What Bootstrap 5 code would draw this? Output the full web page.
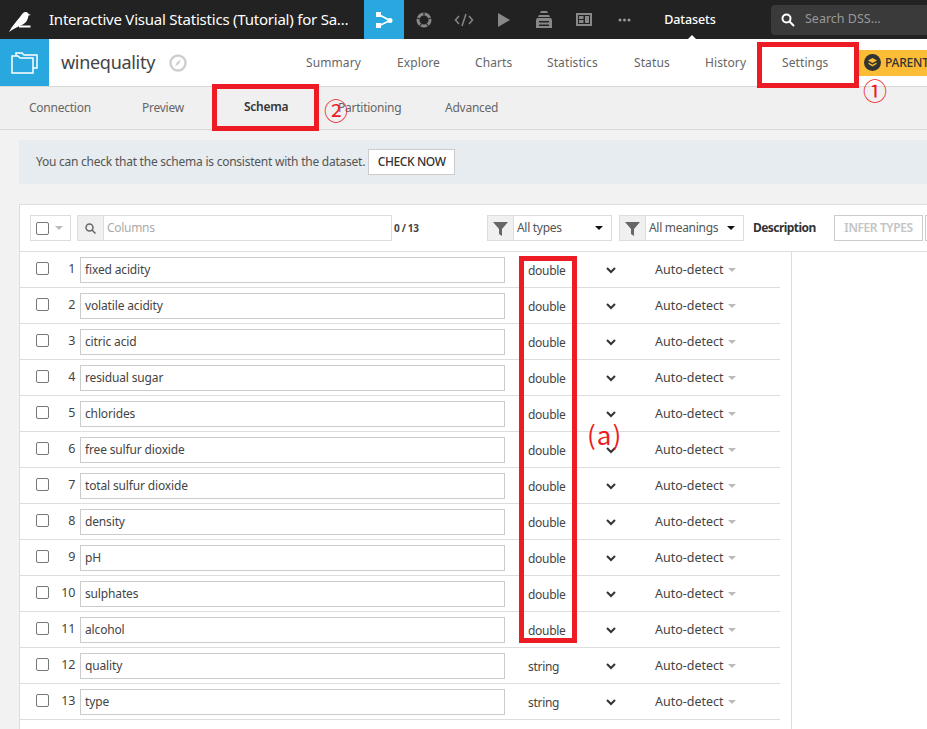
<!DOCTYPE html>
<html lang="en"><head><meta charset="utf-8"><title>winequality schema</title>
<link href="https://cdn.jsdelivr.net/npm/bootstrap@5.3.0/dist/css/bootstrap.min.css" rel="stylesheet">
<style>
html,body{height:729px;overflow:hidden}
body{background:#f2f2f2;font-family:"Noto Sans","Open Sans",sans-serif;font-size:12px;color:#333;position:relative;width:927px}
.top-bar{height:39px;background:#222;color:#fff}
.logo-cell{width:49px;flex:none;padding-left:8px}
.proj-title{width:315px;flex:none;font-size:15px;white-space:nowrap;overflow:hidden;letter-spacing:-.22px}
.tool-cell{width:40px;height:39px;flex:none}
.tool-on{background:#29a8df}
.ds-link{width:127px;flex:none;font-size:12.5px;text-align:center;font-weight:500;position:relative;padding-right:35px;height:39px;line-height:39px;letter-spacing:-.1px}
.ds-link::after{content:"";position:absolute;left:44px;bottom:0;border:4px solid transparent;border-bottom-color:#fff;border-top:0}
.search-box{width:170px;height:30px;background:#3a3a3a;border-radius:4px 0 0 4px;color:#999;flex:none;padding-left:10px;gap:10px;font-size:12.5px}
.obj-bar{height:48px;background:#fff;border-bottom:1px solid #d9d9d9}
.folder-cell{width:49px;height:47px;background:#29a8df;flex:none}
.obj-name{width:257px;flex:none;padding-left:12px;font-size:18px;color:#444;gap:14px;letter-spacing:-.3px}
.obj-nav{display:grid;grid-template-columns:91px 78px 72px 87px 71px 77px 77px;flex:none;color:#666;letter-spacing:.1px}
.parent-tag{background:#fbbd36;height:26px;width:80px;flex:none;padding-left:5px;gap:4px;font-weight:500;color:#333;white-space:nowrap;overflow:hidden;letter-spacing:-.2px}
.sub-bar{height:43px;background:#f0f0f0;border-bottom:1px solid #d9d9d9;color:#666;display:grid;grid-template-columns:113px 102px 94px 107px 100px;padding-left:29px;letter-spacing:-.25px}
.sub-on{color:#333;font-weight:600;margin-top:-2px}
.check-note{margin:10px 0 0 19px;height:44px;background:#e6ecef;padding-left:17px;color:#555;gap:3px;letter-spacing:-.24px;white-space:nowrap}
.check-btn{background:#fff;border:1px solid #ccc;height:26px;width:87px;color:#333;font-weight:500;font-size:12px;letter-spacing:-.4px;flex:none}
.schema-box{margin:20px 0 0 19px;background:#fff;border:solid #ddd;border-width:1px 0 0 1px;width:908px;height:525px}
.tool-row{height:47px;border-bottom:1px solid #ddd;padding-left:10px;white-space:nowrap;letter-spacing:-.3px;width:908px}
.all-box{width:41px;height:26px;border:1px solid #ddd;flex:none;padding-left:5px;gap:6px;margin-right:6px}
.cbx{width:13px;height:13px;border:1px solid #777;border-radius:2px;background:#fff;flex:none;display:block}
.caret-g{width:0;height:0;border:4px solid transparent;border-top-color:#bbb;border-bottom:0;display:inline-block}
.caret-k{width:0;height:0;border:4px solid transparent;border-top-color:#111;border-bottom:0;display:inline-block}
.filter-input{width:315px;height:26px;border:1px solid #ddd;flex:none}
.add-on{width:26px;height:24px;background:#f0f0f0;border-right:1px solid #ddd;flex:none}
.ph{color:#aaa;padding-left:3px}
.cnt{width:95px;flex:none;padding-left:2px;font-size:10px;font-weight:700;color:#444}
.sel-box{width:125px;height:26px;border:1px solid #ddd;flex:none;margin-right:7px;color:#555}
.sel-text{flex:1;padding-left:3px}
.sel-box .caret-k{margin-right:8px}
.desc-lbl{width:83px;flex:none;padding-left:2px;font-weight:700;color:#333;letter-spacing:-.55px}
.infer-btn{width:89px;height:26px;border:1px solid #ccc;color:#c4c4c4;font-weight:600;flex:none;margin-right:2px;font-size:12px;letter-spacing:-.4px}
.stub-btn{width:20px;height:26px;border:1px solid #ccc;flex:none}
.body-wrap{width:772px;border-right:1px solid #ddd;height:477px}
.col-row{height:36px;width:760px;border-bottom:1px solid #ddd;letter-spacing:-.3px}
.c-check{width:17px;margin-left:16px;margin-top:-2px;flex:none}
.c-num{width:22px;text-align:right;flex:none;color:#444;font-size:12.5px;margin-top:-1px}
.c-name{width:425px;height:26px;margin-left:5px;border:1px solid #ccc;background:#fff;padding-left:4px;flex:none;color:#444;letter-spacing:-.15px}
.c-type{width:70px;margin-left:23px;flex:none;color:#444;margin-top:2px}
.c-chev{width:57px;flex:none;padding-left:8px;margin-top:2px}
.c-mean{flex:none;color:#444;gap:4px;font-size:12.5px;margin-top:1px;letter-spacing:0}
.mark-box{position:absolute;border:5px solid #ed1c24}
.mk-settings{left:757px;top:42px;width:102px;height:46px}
.mk-schema{left:212px;top:84px;width:107px;height:47px}
.mk-double{left:519px;top:256px;width:58px;height:387px}
.mark-note{position:absolute;color:#ed1c24;line-height:1;font-family:"Noto Sans CJK JP","Noto Sans",sans-serif}
.nt-one{left:863px;top:78px;font-size:24px}
.nt-two{left:324px;top:98px;font-size:24px}
.nt-a{left:587px;top:421px;font-size:26px;font-weight:400;letter-spacing:1px}
</style></head>
<body>
<div class="top-bar d-flex align-items-center">
  <div class="logo-cell"><svg width="24" height="26" viewBox="0 0 24 26" fill="#fff" class="d-block"><path d="M1 25 C4 19 8 15 12 10 C14 7 15 5 18 5 C19.500 5 20 6 20.500 7 L23 8 L20.500 8.500 C20 13 18 16 14 18 C9 20 5 22 1 25Z"/><path d="M11 18.500H22.500V20.500H11Z"/></svg></div>
  <div class="proj-title">Interactive Visual Statistics (Tutorial) for Sa…</div>
  <div class="tool-cell tool-on d-flex align-items-center justify-content-center"><svg width="18" height="18" viewBox="0 0 18 18" class="d-block"><path d="M3.500 3.500L15 9.500L3.500 15" fill="none" stroke="#fff" stroke-width="1.800"/><rect x="1" y="1" width="5" height="5" fill="#fff"/><rect x="1" y="12" width="5" height="5" fill="#fff"/><circle cx="15" cy="9.500" r="2.500" fill="#fff"/></svg></div>
  <div class="tool-cell d-flex align-items-center justify-content-center"><svg width="18" height="18" viewBox="0 0 18 18" class="d-block"><circle cx="9" cy="9" r="6" fill="none" stroke="#888" stroke-width="3"/><path d="M9 1.500V4.500M1.800 7L4.800 8M16.200 7L13.200 8M4.500 15.500L6.300 13M13.500 15.500L11.700 13" stroke="#222" stroke-width="1.200"/></svg></div>
  <div class="tool-cell d-flex align-items-center justify-content-center"><svg width="20" height="14" viewBox="0 0 20 14" fill="none" stroke="#888" stroke-width="1.500" class="d-block"><path d="M5 3L1.500 7L5 11M15 3L18.500 7L15 11M12 1L8 13"/></svg></div>
  <div class="tool-cell d-flex align-items-center justify-content-center"><svg width="14" height="14" viewBox="0 0 14 14" class="d-block"><path d="M1 0L13 7L1 14Z" fill="#888"/></svg></div>
  <div class="tool-cell d-flex align-items-center justify-content-center"><svg width="16" height="17" viewBox="0 0 16 17" fill="#888" class="d-block"><path d="M5 0H11L12 2H4ZM3 4H13L14 6H2ZM1 7H15L16 9V17H0V9ZM3 10V11.500H13V10ZM3 13.500V15H13V13.500Z" fill-rule="evenodd"/></svg></div>
  <div class="tool-cell d-flex align-items-center justify-content-center"><svg width="16" height="13" viewBox="0 0 16 13" fill="#888" class="d-block"><path fill-rule="evenodd" d="M0 0H16V13H0ZM2 2V11H14V2ZM3 3H7.500V6H3ZM3 7H7.500V10H3ZM9 3H13V10H9Z"/></svg></div>
  <div class="tool-cell d-flex align-items-center justify-content-center"><svg width="13" height="4" viewBox="0 0 13 4" fill="#999" class="d-block"><circle cx="2" cy="2" r="1.500"/><circle cx="6.500" cy="2" r="1.500"/><circle cx="11" cy="2" r="1.500"/></svg></div>
  <div class="ds-link">Datasets</div>
  <div class="search-box d-flex align-items-center"><svg width="14" height="14" viewBox="0 0 14 14" fill="none" stroke="#fff" stroke-width="2"><circle cx="5.500" cy="5.500" r="4"/><path d="M8.500 8.500L13 13"/></svg><span>Search DSS...</span></div>
</div>
<div class="obj-bar d-flex">
  <div class="folder-cell d-flex align-items-center justify-content-center"><svg width="27" height="23" viewBox="0 0 27 23" fill="none" stroke="#fff" stroke-width="1.500"><path d="M1 5H7L9 7H22V22H1Z"/><path d="M5 5V2H11L13 4H26V17H22"/></svg></div>
  <div class="obj-name d-flex align-items-center"><span>winequality</span><svg width="18" height="18" viewBox="0 0 18 18"><circle cx="9" cy="9" r="7.500" fill="none" stroke="#cfcfcf" stroke-width="2.400"/><path d="M12 5.500L10 10L6 12.500L8 8Z" fill="#cfcfcf"/></svg></div>
  <nav class="obj-nav align-items-center"><span>Summary</span><span>Explore</span><span>Charts</span><span>Statistics</span><span>Status</span><span>History</span><span>Settings</span></nav>
  <div class="parent-tag d-flex align-items-center align-self-center"><svg width="17" height="17" viewBox="0 0 17 17"><circle cx="8.500" cy="8.500" r="8.500" fill="#333"/><path d="M8.500 4L13 6.500L8.500 9L4 6.500ZM4.500 8.500L8.500 10.700L12.500 8.500V10L8.500 12.500L4.500 10Z" fill="#fbbd36"/></svg><span>PARENT</span></div>
</div>
<nav class="sub-bar align-items-center"><span>Connection</span><span>Preview</span><span class="sub-on">Schema</span><span>Partitioning</span><span>Advanced</span></nav>
<div class="check-note d-flex align-items-center"><span>You can check that the schema is consistent with the dataset.</span><div class="check-btn d-flex align-items-center justify-content-center">CHECK NOW</div></div>
<div class="schema-box">
  <div class="tool-row d-flex align-items-center">
    <div class="all-box d-flex align-items-center"><i class="cbx"></i><i class="caret-g"></i></div>
    <div class="filter-input d-flex align-items-center"><div class="add-on d-flex align-items-center justify-content-center"><svg width="11" height="11" viewBox="0 0 11 11" fill="none" stroke="#666" stroke-width="1.500"><circle cx="4.500" cy="4.500" r="3.500"/><path d="M7 7L10.500 10.500"/></svg></div><span class="ph">Columns</span></div>
    <div class="cnt">0 / 13</div>
    <div class="sel-box d-flex align-items-center"><div class="add-on d-flex align-items-center justify-content-center"><svg width="15" height="15" viewBox="0 0 15 15" fill="#666"><path d="M0 1H15L9 8V15L6 13V8Z"/></svg></div><span class="sel-text">All types</span><i class="caret-k"></i></div>
    <div class="sel-box d-flex align-items-center"><div class="add-on d-flex align-items-center justify-content-center"><svg width="15" height="15" viewBox="0 0 15 15" fill="#666"><path d="M0 1H15L9 8V15L6 13V8Z"/></svg></div><span class="sel-text">All meanings</span><i class="caret-k"></i></div>
    <div class="desc-lbl">Description</div>
    <div class="infer-btn d-flex align-items-center justify-content-center">INFER TYPES</div>
    <div class="stub-btn"></div>
  </div>
  <div class="body-wrap">
    <div class="col-row d-flex align-items-center"><div class="c-check"><i class="cbx"></i></div><div class="c-num">1</div><div class="c-name d-flex align-items-center">fixed acidity</div><div class="c-type">double</div><div class="c-chev"><svg width="10" height="7" viewBox="0 0 10 7" fill="none" stroke="#333" stroke-width="2" class="d-block"><path d="M1 1L5 5L9 1"/></svg></div><div class="c-mean d-flex align-items-center"><span>Auto-detect</span><i class="caret-g"></i></div></div>
    <div class="col-row d-flex align-items-center"><div class="c-check"><i class="cbx"></i></div><div class="c-num">2</div><div class="c-name d-flex align-items-center">volatile acidity</div><div class="c-type">double</div><div class="c-chev"><svg width="10" height="7" viewBox="0 0 10 7" fill="none" stroke="#333" stroke-width="2" class="d-block"><path d="M1 1L5 5L9 1"/></svg></div><div class="c-mean d-flex align-items-center"><span>Auto-detect</span><i class="caret-g"></i></div></div>
    <div class="col-row d-flex align-items-center"><div class="c-check"><i class="cbx"></i></div><div class="c-num">3</div><div class="c-name d-flex align-items-center">citric acid</div><div class="c-type">double</div><div class="c-chev"><svg width="10" height="7" viewBox="0 0 10 7" fill="none" stroke="#333" stroke-width="2" class="d-block"><path d="M1 1L5 5L9 1"/></svg></div><div class="c-mean d-flex align-items-center"><span>Auto-detect</span><i class="caret-g"></i></div></div>
    <div class="col-row d-flex align-items-center"><div class="c-check"><i class="cbx"></i></div><div class="c-num">4</div><div class="c-name d-flex align-items-center">residual sugar</div><div class="c-type">double</div><div class="c-chev"><svg width="10" height="7" viewBox="0 0 10 7" fill="none" stroke="#333" stroke-width="2" class="d-block"><path d="M1 1L5 5L9 1"/></svg></div><div class="c-mean d-flex align-items-center"><span>Auto-detect</span><i class="caret-g"></i></div></div>
    <div class="col-row d-flex align-items-center"><div class="c-check"><i class="cbx"></i></div><div class="c-num">5</div><div class="c-name d-flex align-items-center">chlorides</div><div class="c-type">double</div><div class="c-chev"><svg width="10" height="7" viewBox="0 0 10 7" fill="none" stroke="#333" stroke-width="2" class="d-block"><path d="M1 1L5 5L9 1"/></svg></div><div class="c-mean d-flex align-items-center"><span>Auto-detect</span><i class="caret-g"></i></div></div>
    <div class="col-row d-flex align-items-center"><div class="c-check"><i class="cbx"></i></div><div class="c-num">6</div><div class="c-name d-flex align-items-center">free sulfur dioxide</div><div class="c-type">double</div><div class="c-chev"><svg width="10" height="7" viewBox="0 0 10 7" fill="none" stroke="#333" stroke-width="2" class="d-block"><path d="M1 1L5 5L9 1"/></svg></div><div class="c-mean d-flex align-items-center"><span>Auto-detect</span><i class="caret-g"></i></div></div>
    <div class="col-row d-flex align-items-center"><div class="c-check"><i class="cbx"></i></div><div class="c-num">7</div><div class="c-name d-flex align-items-center">total sulfur dioxide</div><div class="c-type">double</div><div class="c-chev"><svg width="10" height="7" viewBox="0 0 10 7" fill="none" stroke="#333" stroke-width="2" class="d-block"><path d="M1 1L5 5L9 1"/></svg></div><div class="c-mean d-flex align-items-center"><span>Auto-detect</span><i class="caret-g"></i></div></div>
    <div class="col-row d-flex align-items-center"><div class="c-check"><i class="cbx"></i></div><div class="c-num">8</div><div class="c-name d-flex align-items-center">density</div><div class="c-type">double</div><div class="c-chev"><svg width="10" height="7" viewBox="0 0 10 7" fill="none" stroke="#333" stroke-width="2" class="d-block"><path d="M1 1L5 5L9 1"/></svg></div><div class="c-mean d-flex align-items-center"><span>Auto-detect</span><i class="caret-g"></i></div></div>
    <div class="col-row d-flex align-items-center"><div class="c-check"><i class="cbx"></i></div><div class="c-num">9</div><div class="c-name d-flex align-items-center">pH</div><div class="c-type">double</div><div class="c-chev"><svg width="10" height="7" viewBox="0 0 10 7" fill="none" stroke="#333" stroke-width="2" class="d-block"><path d="M1 1L5 5L9 1"/></svg></div><div class="c-mean d-flex align-items-center"><span>Auto-detect</span><i class="caret-g"></i></div></div>
    <div class="col-row d-flex align-items-center"><div class="c-check"><i class="cbx"></i></div><div class="c-num">10</div><div class="c-name d-flex align-items-center">sulphates</div><div class="c-type">double</div><div class="c-chev"><svg width="10" height="7" viewBox="0 0 10 7" fill="none" stroke="#333" stroke-width="2" class="d-block"><path d="M1 1L5 5L9 1"/></svg></div><div class="c-mean d-flex align-items-center"><span>Auto-detect</span><i class="caret-g"></i></div></div>
    <div class="col-row d-flex align-items-center"><div class="c-check"><i class="cbx"></i></div><div class="c-num">11</div><div class="c-name d-flex align-items-center">alcohol</div><div class="c-type">double</div><div class="c-chev"><svg width="10" height="7" viewBox="0 0 10 7" fill="none" stroke="#333" stroke-width="2" class="d-block"><path d="M1 1L5 5L9 1"/></svg></div><div class="c-mean d-flex align-items-center"><span>Auto-detect</span><i class="caret-g"></i></div></div>
    <div class="col-row d-flex align-items-center"><div class="c-check"><i class="cbx"></i></div><div class="c-num">12</div><div class="c-name d-flex align-items-center">quality</div><div class="c-type">string</div><div class="c-chev"><svg width="10" height="7" viewBox="0 0 10 7" fill="none" stroke="#333" stroke-width="2" class="d-block"><path d="M1 1L5 5L9 1"/></svg></div><div class="c-mean d-flex align-items-center"><span>Auto-detect</span><i class="caret-g"></i></div></div>
    <div class="col-row d-flex align-items-center"><div class="c-check"><i class="cbx"></i></div><div class="c-num">13</div><div class="c-name d-flex align-items-center">type</div><div class="c-type">string</div><div class="c-chev"><svg width="10" height="7" viewBox="0 0 10 7" fill="none" stroke="#333" stroke-width="2" class="d-block"><path d="M1 1L5 5L9 1"/></svg></div><div class="c-mean d-flex align-items-center"><span>Auto-detect</span><i class="caret-g"></i></div></div>
  </div>
</div>
<div class="mark-box mk-settings"></div>
<div class="mark-box mk-schema"></div>
<div class="mark-box mk-double"></div>
<div class="mark-note nt-one">①</div>
<div class="mark-note nt-two">②</div>
<div class="mark-note nt-a">(a)</div>
<script src="https://cdn.jsdelivr.net/npm/bootstrap@5.3.0/dist/js/bootstrap.bundle.min.js"></script>
</body></html>
